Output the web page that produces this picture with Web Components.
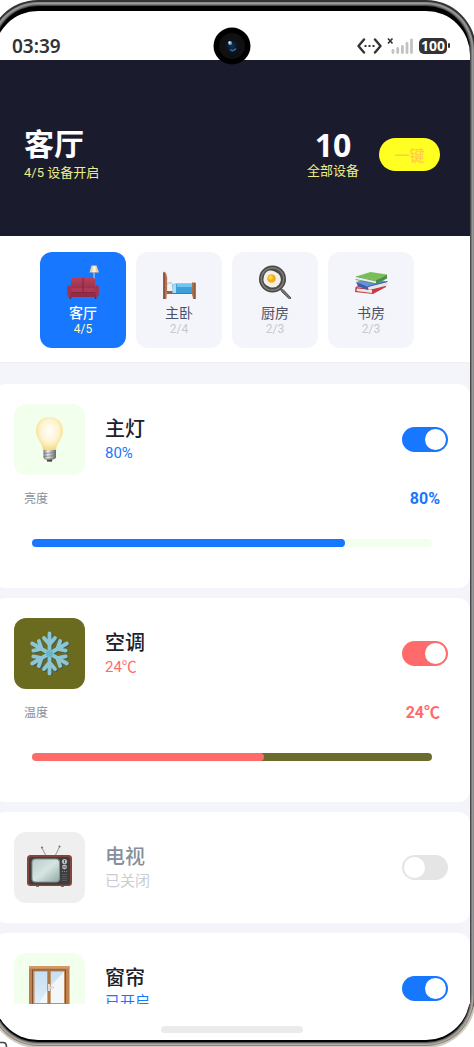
<!DOCTYPE html>
<html lang="zh-CN">
<head>
<meta charset="utf-8">
<meta name="viewport" content="width=device-width, initial-scale=1">
<title>智能家居</title>
<style>
  html{
    height: 100%;
  }
  body{
    margin: 0;
    height: 100vh;
    overflow: hidden;
    background: #fff;
    font-family: Roboto, "Noto Sans CJK SC", sans-serif;
  }
</style>
</head>
<body>

<phone-shell>
  <status-bar slot="status" time="03:39" battery="100"></status-bar>
  <room-header name="客厅" status="4/5 设备开启" total="10" total-label="全部设备" action="一键"></room-header>
  <room-tabs>
    <room-tab icon="sofa" name="客厅" count="4/5" active></room-tab>
    <room-tab icon="bed" name="主卧" count="2/4"></room-tab>
    <room-tab icon="pan" name="厨房" count="2/3"></room-tab>
    <room-tab icon="books" name="书房" count="2/3"></room-tab>
  </room-tabs>
  <device-list>
    <device-card icon="bulb" name="主灯" status="80%" on>
      <device-slider label="亮度" text="80%" min="10" max="100" value="80"></device-slider>
    </device-card>
    <device-card icon="snow" name="空调" status="24℃" on style="--accent:#ff6b6b; --tint:#6b6b1f; --track:#6b6b2e">
      <device-slider label="温度" text="24℃" min="16" max="30" value="24"></device-slider>
    </device-card>
    <device-card icon="tv" name="电视" status="已关闭"></device-card>
    <device-card icon="window" name="窗帘" status="已开启" on></device-card>
  </device-list>
</phone-shell>

<!-- Phone body: bezel rings, camera hole, gesture bar -->
<template id="phone-shell">
  <style>
    :host{
      display: flex;
      box-sizing: border-box;
      height: 100%;
      padding: 11px 4px 7px 0;
      position: relative;
      overflow: hidden;
    }
    .screen{
      flex: 1;
      min-width: 0;
      margin-left: -6px;
      display: flex;
      flex-direction: column;
      border-radius: 44px;
      background: #fff;
      box-shadow:
        0 -5px 0 0 #000, 0 2px 0 0 #000,
        0 -5px 0 1px #4a4a4a, 0 2px 0 1px #555,
        0 -5px 0 2px #777, 0 2px 0 2px #8a8a8a,
        0 -5px 0 3px #9a9a9a, 0 2px 0 3px #b5b0a8,
        0 -5px 0 4px #8a8a8a, 0 2px 0 4px #8d8272,
        0 -5px 0 6px #333, 0 2px 0 6px #cfcac2;
    }
    .content{
      flex: 1;
      min-height: 0;
      display: flex;
      flex-direction: column;
      overflow: hidden;
    }
    .camera{
      position: absolute;
      left: calc(50% - 24px);
      top: 27px;
      width: 38px;
      height: 38px;
    }
    .mark{
      position: absolute;
      left: 0;
      bottom: 0;
      width: 8px;
      height: 6px;
    }
    .home{
      flex: none;
      height: 36px;
      display: flex;
      align-items: center;
      justify-content: center;
      padding-top: 14px;
      box-sizing: border-box;
    }
    .home span{
      width: 142px;
      height: 7px;
      border-radius: 4px;
      background: #ebebeb;
    }
  </style>
  <div class="screen">
    <slot name="status"></slot>
    <div class="content"><slot></slot></div>
    <div class="home"><span></span></div>
  </div>
  <svg class="camera" viewBox="0 0 38 38">
    <defs>
      <radialGradient id="lens">
        <stop offset="0" stop-color="#16324f"/>
        <stop offset=".6" stop-color="#0c1522"/>
        <stop offset="1" stop-color="#101012"/>
      </radialGradient>
    </defs>
    <circle cx="19" cy="19" r="18.500" fill="#000"/>
    <circle cx="19" cy="19" r="13" fill="#101012"/>
    <circle cx="19" cy="19" r="8.500" fill="url(#lens)"/>
    <circle cx="17" cy="16" r="2" fill="#5fa8dc"/>
    <circle cx="16.500" cy="15.500" r=".9" fill="#e6f6ff"/>
    <path d="M17 22.500q3 2.500 6-1" fill="none" stroke="#2c6da8" stroke-width="1.600"/>
  </svg>
  <svg class="mark" viewBox="0 0 8 6"><path d="M0 1.500h3q3.500 0 3.500 4.500" fill="none" stroke="#444" stroke-width="1.600"/></svg>
</template>

<template id="status-bar">
  <style>
    :host{
      display: flex;
      align-items: center;
      height: 49px;
      flex: none;
      box-sizing: border-box;
      padding: 20px 20px 0 18px;
      color: #333;
      font-family: "Noto Sans", sans-serif;
    }
    .time{
      font-size: 19px;
      font-weight: 600;
      flex: 1;
    }
    svg{
      display: block;
    }
    .signal{
      margin: 0 6px 0 5px;
    }
    .battery{
      background: #333;
      color: #fff;
      font-size: 14px;
      font-weight: 700;
      line-height: 16px;
      width: 28px;
      text-align: center;
      border-radius: 5px;
    }
    .cap{
      width: 2px;
      height: 5px;
      margin-left: 1px;
      background: #333;
      border-radius: 1px;
    }
  </style>
  <span class="time"></span>
  <svg width="25" height="16" viewBox="0 0 25 16">
    <path d="M7 1.500 1.500 8 7 14.500M18 1.500 23.500 8 18 14.500" fill="none" stroke="#333" stroke-width="2.400" stroke-linecap="round" stroke-linejoin="round"/>
    <path d="M7.500 7h2v2h-2zM11.500 7h2v2h-2zM15.500 7h2v2h-2z" fill="#333"/>
  </svg>
  <svg class="signal" width="26" height="16" viewBox="0 0 26 16">
    <path d="M1 .500l4.500 5M5.500.500 1 5.500" stroke="#333" stroke-width="1.600"/>
    <path d="M6 14.500v-2M10.700 14.500v-4M15.400 14.500V8.500M20 14.500v-9M24.500 14.500V2" stroke="#c2c2c2" stroke-width="2.800" stroke-linecap="round"/>
  </svg>
  <span class="battery"></span>
  <span class="cap"></span>
</template>

<template id="room-header">
  <style>
    :host{
      display: flex;
      align-items: center;
      height: 176px;
      flex: none;
      box-sizing: border-box;
      padding: 12px 30px 0;
      background: #1b1b2e;
      box-shadow: 0 1px 0 #8f8c99;
      color: #fff;
    }
    .room{
      flex: 1;
    }
    h1{
      margin: 0;
      font-size: 30px;
      font-weight: 700;
      line-height: 38px;
    }
    .total{
      text-align: center;
      margin-right: 20px;
    }
    .num{
      font-family: "Noto Sans", sans-serif;
      font-size: 32px;
      font-weight: 700;
      line-height: 34px;
    }
    p{
      margin: 0;
      font-size: 13px;
      line-height: 18px;
      color: #eeee88;
    }
    button{
      width: 61px;
      height: 33px;
      padding: 0;
      border: 0;
      border-radius: 17px;
      background: #ffff22;
      color: #ffcc44;
      font: 500 15px Roboto, "Noto Sans CJK SC", sans-serif;
    }
  </style>
  <div class="room"><h1></h1><p class="status"></p></div>
  <div class="total"><div class="num"></div><p class="label"></p></div>
  <button type="button"></button>
</template>

<template id="room-tabs">
  <style>
    :host{
      display: flex;
      gap: 10px;
      flex: none;
      padding: 16px 56px 14px 46px;
      background: #fff;
      border-bottom: 1px solid #eff0f2;
    }
  </style>
  <slot></slot>
</template>

<template id="room-tab">
  <style>
    :host{
      display: block;
      flex: 1;
    }
    button{
      width: 100%;
      height: 96px;
      display: flex;
      flex-direction: column;
      align-items: center;
      padding: 13px 0 0;
      border: 0;
      border-radius: 12px;
      background: #f4f5fa;
      font-family: inherit;
    }
    app-icon{
      width: 34px;
      height: 34px;
      margin-bottom: 4px;
    }
    .name{
      font-size: 14px;
      line-height: 20px;
      color: #4a5068;
    }
    .count{
      font-size: 12px;
      line-height: 12px;
      color: #c8c9ce;
    }
    :host([active]) button{
      background: #1777ff;
    }
    :host([active]) .name{
      color: #fff;
      font-weight: 500;
    }
    :host([active]) .count{
      color: #ffffbb;
    }
  </style>
  <button type="button">
    <app-icon></app-icon>
    <span class="name"></span>
    <span class="count"></span>
  </button>
</template>

<template id="device-list">
  <style>
    :host{
      flex: 1;
      min-height: 0;
      display: flex;
      flex-direction: column;
      gap: 10px;
      padding-top: 21px;
      overflow: hidden;
      background: #f4f5fa;
    }
  </style>
  <slot></slot>
</template>

<template id="device-card">
  <style>
    :host{
      display: block;
      flex: none;
      padding: 20px 0;
      border-radius: 12px;
      background: #fff;
    }
    .row{
      display: flex;
      align-items: center;
      padding: 0 22px 0 20px;
    }
    .tile{
      width: 71px;
      height: 71px;
      display: flex;
      align-items: center;
      justify-content: center;
      border-radius: 12px;
      background: #efefef;
    }
    app-icon{
      width: 45px;
      height: 45px;
    }
    label{
      flex: 1;
      margin-left: 20px;
    }
    .name, .status{
      display: block;
    }
    .name{
      font-size: 20px;
      font-weight: 500;
      line-height: 26px;
      color: #86909c;
    }
    .status{
      font-size: 15px;
      line-height: 22px;
      color: #c9cdd4;
    }
    input{
      appearance: none;
      width: 46px;
      height: 25px;
      margin: 0;
      padding: 2px;
      box-sizing: border-box;
      border-radius: 13px;
      background: #e5e5e5;
    }
    input::before{
      content: "";
      display: block;
      width: 21px;
      height: 21px;
      border-radius: 50%;
      background: #fff;
    }
    input:checked{
      background: var(--accent, #1777ff);
    }
    input:checked::before{
      margin-left: auto;
    }
    :host([on]) .tile{
      background: var(--tint, #f2ffec);
    }
    :host([on]) .name{
      color: #1d2129;
    }
    :host([on]) .status{
      color: var(--accent, #1777ff);
    }
  </style>
  <div class="row">
    <div class="tile"><app-icon></app-icon></div>
    <label for="power"><span class="name"></span><span class="status"></span></label>
    <input type="checkbox" id="power">
  </div>
  <slot></slot>
</template>

<template id="device-slider">
  <style>
    :host{
      display: block;
      padding: 14px 30px 17px;
    }
    .row{
      display: flex;
      align-items: center;
      justify-content: space-between;
      line-height: 20px;
    }
    label{
      font-size: 12px;
      color: #86909c;
    }
    output{
      font-size: 16px;
      font-weight: 700;
      color: var(--accent, #1777ff);
    }
    .bar{
      padding: 30px 8px 4px;
    }
    input{
      appearance: none;
      display: block;
      width: 100%;
      height: 8px;
      margin: 0;
      border-radius: 4px;
      overflow: hidden;
      background: linear-gradient(to right, var(--accent, #1777ff) var(--fill), var(--track, #f2ffec) var(--fill));
    }
    input::-webkit-slider-thumb{
      appearance: none;
      width: 8px;
      height: 8px;
      border-radius: 50%;
      background: var(--accent, #1777ff);
    }
  </style>
  <div class="row"><label for="range"></label><output for="range"></output></div>
  <div class="bar"><input type="range" id="range"></div>
</template>

<script>
const ICONS = {
  sofa: `<svg viewBox="0 0 34 34">
    <defs><linearGradient id="s" x2="0" y2="1"><stop stop-color="#b9415d"/><stop offset="1" stop-color="#8f2944"/></linearGradient></defs>
    <path d="M28 7v9" stroke="#c5c9cf" stroke-width="1.200"/>
    <path d="M25.500.5h5l2.500 7H23.500z" fill="#e9cfa2"/><path d="M27 1h2.500l.8 6h-4z" fill="#fff3d2"/>
    <path d="M4 31l.5 3M30 31l-.5 3" stroke="#47373b" stroke-width="1.500"/>
    <path d="M5 15q0-2.500 2.500-2.500h19q2.500 0 2.500 2.500v13H5z" fill="url(#s)"/>
    <path d="M17 13v10" stroke="#7e2039" stroke-width=".9"/>
    <path d="M4 23h26v5H4z" fill="#ad3956"/><path d="M17 23v4M5 27.500h24" stroke="#7e2039" stroke-width=".8"/>
    <path d="M1 21.500q2.500-2.500 4.500.5V32H3q-1.800 0-1.800-4zM33 21.500q-2.500-2.500-4.500.5V32H31q1.800 0 1.800-4z" fill="#a33450"/>
    <path d="M4 28h26v4H4z" fill="#912b46"/></svg>`,
  bed: `<svg viewBox="0 0 34 34">
    <path d="M5 26h25v3H5z" fill="#9b6044"/>
    <path d="M5 17.500l4-1 3 3.500v5H5z" fill="#ccd5de"/><path d="M5 20q4-3 6 1v5H5z" fill="#eef2f5"/>
    <path d="M10 20q2-2 5-1.500h15.500V28H11z" fill="#3f9fdb"/>
    <path d="M10.500 19.500 14 19v9h-3.500z" fill="#a9dcf6"/><path d="M15 19h15v3H15z" fill="#70c5ef"/>
    <path d="M1.300 7q1.700-1 3 2 1.500 4 .8 8v8l-.7 9H1.500z" fill="#b4744e"/><path d="M1.300 7v27h1.400V9z" fill="#7c452f"/>
    <path d="M30 17.500h3.500V34h-2.400L30 29z" fill="#aa6c4a"/><path d="M32.500 18v16h1V18z" fill="#7c452f"/></svg>`,
  pan: `<svg viewBox="0 0 34 34">
    <path d="M22.500 23.500l3 1.500 7.500 8-1.500 1-8-7.500z" fill="#777" stroke="#4b4b4b"/>
    <path d="M20 21l4 4" stroke="#777" stroke-width="1.500"/>
    <circle cx="14.500" cy="14" r="13.500" fill="#454545"/><circle cx="14.500" cy="14" r="12" fill="#817d78"/>
    <circle cx="14.500" cy="14" r="10.500" fill="#4d4a48"/>
    <path d="M6 11Q8 5 13 5.500t8.500 4.500q3 5-.5 9.500t-9.500 2.500Q3.500 19 6 11z" fill="#f1f0e9"/>
    <circle cx="13.500" cy="13.500" r="4.300" fill="#f5ad19"/><circle cx="12.500" cy="12.500" r="2.200" fill="#ffd03e"/></svg>`,
  books: `<svg viewBox="0 0 34 34">
    <path d="M2 22l16 1.500 14-4-4-2L8 16z" fill="#e05b5d"/><path d="M1.500 22 18 24l14-4.500v2.500L19 29 1 27z" fill="#c33d44"/>
    <path d="M3 23.500l15 1.500v3L2.500 26z" fill="#e9e9e7"/>
    <path d="M2 17l12 5 19.500-5-14-5z" fill="#5f91e4"/><path d="M2 17l12 5v3L4 21z" fill="#355db0"/><path d="M14 21.500 33.500 17v3.500L15 25z" fill="#e5e6e8"/>
    <path d="M14 21.500 33.500 16.500" stroke="#355db0"/>
    <path d="M2 11.500 16.500 7 33 9.500 22 15.500z" fill="#79bf59"/><path d="M2 11.500 22 15.500v3L2 14.500z" fill="#ececea"/>
    <path d="M22 15.500 33 9.500v4L22 19z" fill="#4c923b"/><path d="M2 11.500l20 4.500M1.500 14.500 22 18.700" stroke="#4c923b" stroke-width=".7" fill="none"/></svg>`,
  bulb: `<svg viewBox="0 0 45 45">
    <defs>
      <radialGradient id="g" cx=".5" cy=".42" r=".6"><stop stop-color="#fffefa"/><stop offset=".55" stop-color="#fff5d4"/><stop offset="1" stop-color="#f5d675"/></radialGradient>
      <linearGradient id="m"><stop stop-color="#777"/><stop offset=".35" stop-color="#eee"/><stop offset="1" stop-color="#666"/></linearGradient>
    </defs>
    <path d="M22.500 0C14.500 0 9 6 9 13.500c0 5 2 8 4 11.500 2 3 2.500 4.500 3 8.500h13c.5-4 1-5.500 3-8.500 2-3.500 4-6.500 4-11.500C36 6 30.500 0 22.500 0z" fill="url(#g)"/>
    <path d="M16.500 33h12.500v8l-3 1.500-1.500 2.500h-4L19 42.500 16.500 41z" fill="url(#m)"/>
    <path d="M16.500 36.500 29 35.500M16.500 39.500 29 38.500M17.500 42 28 41.500" stroke="#777" stroke-width=".7"/>
    <path d="M20 43.500h5" stroke="#444" stroke-width="2"/></svg>`,
  snow: `<svg viewBox="0 0 45 45">
    <defs>
      <g id="arm"><path d="M22.500 22.500V2.500M22.500 13.500 17 7M22.500 13.500 28 7"/></g>
      <g id="flake" fill="none" stroke-width="3.800" stroke-linecap="round">
        <use href="#arm"/><use href="#arm" transform="rotate(60 22.500 22.500)"/><use href="#arm" transform="rotate(120 22.500 22.500)"/>
        <use href="#arm" transform="rotate(180 22.500 22.500)"/><use href="#arm" transform="rotate(240 22.500 22.500)"/><use href="#arm" transform="rotate(300 22.500 22.500)"/>
      </g>
    </defs>
    <use href="#flake" x="1" y="1" stroke="#41585d"/><use href="#flake" stroke="#8cc6d2"/>
    <circle cx="22.500" cy="22.500" r="3.500" fill="#6bb5cb"/></svg>`,
  tv: `<svg viewBox="0 0 45 45">
    <defs><linearGradient id="t" x2="1" y2="1"><stop stop-color="#b9cdcb"/><stop offset=".5" stop-color="#d7e5e2"/><stop offset="1" stop-color="#92aaa8"/></linearGradient></defs>
    <path d="M19 11 15 3M28 11l4.500-9" stroke="#8b8b8b" stroke-width=".9"/>
    <circle cx="15" cy="2.500" r="1.100" fill="#777"/><circle cx="32.500" cy="1.500" r="1.100" fill="#777"/>
    <path d="M9 40h3v2H9zM34 40h3v2h-3z" fill="#8d706a"/>
    <rect y="10" width="45" height="31" rx="3.500" fill="#87443b"/>
    <rect x="2" y="12" width="41" height="27.500" rx="2.500" fill="#3c3e3f"/>
    <rect x="4.500" y="13.500" width="28.500" height="24" rx="4" fill="#829492"/>
    <rect x="5.500" y="14.500" width="26.500" height="22" rx="3.500" fill="url(#t)"/>
    <circle cx="37.500" cy="16.500" r="2.600" fill="#b9bdbd"/><circle cx="37.500" cy="22" r="2.400" fill="#b9bdbd"/>
    <path d="M37.500 15v3M36 22h3" stroke="#555"/><path d="M35 26.500h5" stroke="#bd853e" stroke-width="1.200" stroke-dasharray="1 1"/>
    <path d="M35 29.500h5M35 31.500h5M35 33.500h5M35 35.500h5" stroke="#575959"/></svg>`,
  window: `<svg viewBox="0 0 45 45">
    <defs><linearGradient id="w" x2="0" y2="1"><stop stop-color="#c6dff3"/><stop offset="1" stop-color="#dfedf8"/></linearGradient></defs>
    <path d="M2 0h40.500v45H2z" fill="#bd8250"/><path d="M2 0h40.500v2.500H2z" fill="#d19b69"/>
    <path d="M5 3.500h34v41.500H5z" fill="#87512f"/><path d="M6 4.500h32v40.500H6z" fill="#c58d5d"/>
    <path d="M7.500 5.500h13v31.500h-13zM23.500 5.500H37v31.500H23.500z" fill="url(#w)"/>
    <path d="M20.500 24v13H12zM37 6v31H23.500V20z" fill="#f3f7f8"/>
    <path d="M20.500 4.500h3V45h-3z" fill="#b0763f"/>
    <path d="M22 18v7M21 21.500h6" stroke="#d8dadc" stroke-width="2"/></svg>`
};

// Clones the template with the same id as the tag into an open shadow root
class BaseElement extends HTMLElement {
  constructor() {
    super();
    let tpl = document.getElementById(this.localName);
    this.attachShadow({mode: 'open'}).appendChild(tpl.content.cloneNode(true));
  }
  $(selector){
    return this.shadowRoot.querySelector(selector);
  }
  // fill({".name": "name"}) puts the attribute's text into the node
  fill(map){
    for(let selector in map){
      this.$(selector).textContent = this.getAttribute(map[selector]);
    }
  }
}

class AppIcon extends HTMLElement {
  static get observedAttributes() {
    return ['name'];
  }
  constructor() {
    super();
    this.attachShadow({mode: 'open'});
  }
  attributeChangedCallback() {
    this.shadowRoot.innerHTML = "<style>:host{display:block} svg{display:block;width:100%;height:100%}</style>"
      + (ICONS[this.getAttribute('name')] || "");
  }
}

class StatusBar extends BaseElement {
  connectedCallback() {
    this.fill({".time": "time", ".battery": "battery"});
  }
}

class RoomHeader extends BaseElement {
  connectedCallback() {
    this.fill({"h1": "name", ".status": "status", ".num": "total", ".label": "total-label", "button": "action"});
  }
}

class RoomTab extends BaseElement {
  connectedCallback() {
    this.fill({".name": "name", ".count": "count"});
    this.$("app-icon").setAttribute("name", this.getAttribute("icon"));
    this.onclick = () => {
      for(let tab of this.parentNode.children){
        tab.toggleAttribute("active", tab === this);
      }
    };
  }
}

class DeviceCard extends BaseElement {
  connectedCallback() {
    this.fill({".name": "name", ".status": "status"});
    this.$("app-icon").setAttribute("name", this.getAttribute("icon"));
    let power = this.$("input");
    power.checked = this.hasAttribute("on");
    power.onchange = () => this.toggleAttribute("on", power.checked);
  }
}

class DeviceSlider extends BaseElement {
  connectedCallback() {
    this.fill({"label": "label", "output": "text"});
    this.range = this.$("input");
    for(let attr of ["min", "max", "value"]){
      this.range[attr] = this.getAttribute(attr);
    }
    this.unit = this.getAttribute("text").replace(/\d+/, "");
    this.range.oninput = () => {
      this.$("output").textContent = this.range.value + this.unit;
      this.paint();
    };
    this.paint();
  }
  paint(){
    let {min, max, value} = this.range;
    this.range.style.setProperty("--fill", (value - min) / (max - min) * 100 + "%");
  }
}

customElements.define('app-icon', AppIcon);
customElements.define('phone-shell', class extends BaseElement {});
customElements.define('status-bar', StatusBar);
customElements.define('room-header', RoomHeader);
customElements.define('room-tabs', class extends BaseElement {});
customElements.define('room-tab', RoomTab);
customElements.define('device-list', class extends BaseElement {});
customElements.define('device-card', DeviceCard);
customElements.define('device-slider', DeviceSlider);
</script>
</body>
</html>
